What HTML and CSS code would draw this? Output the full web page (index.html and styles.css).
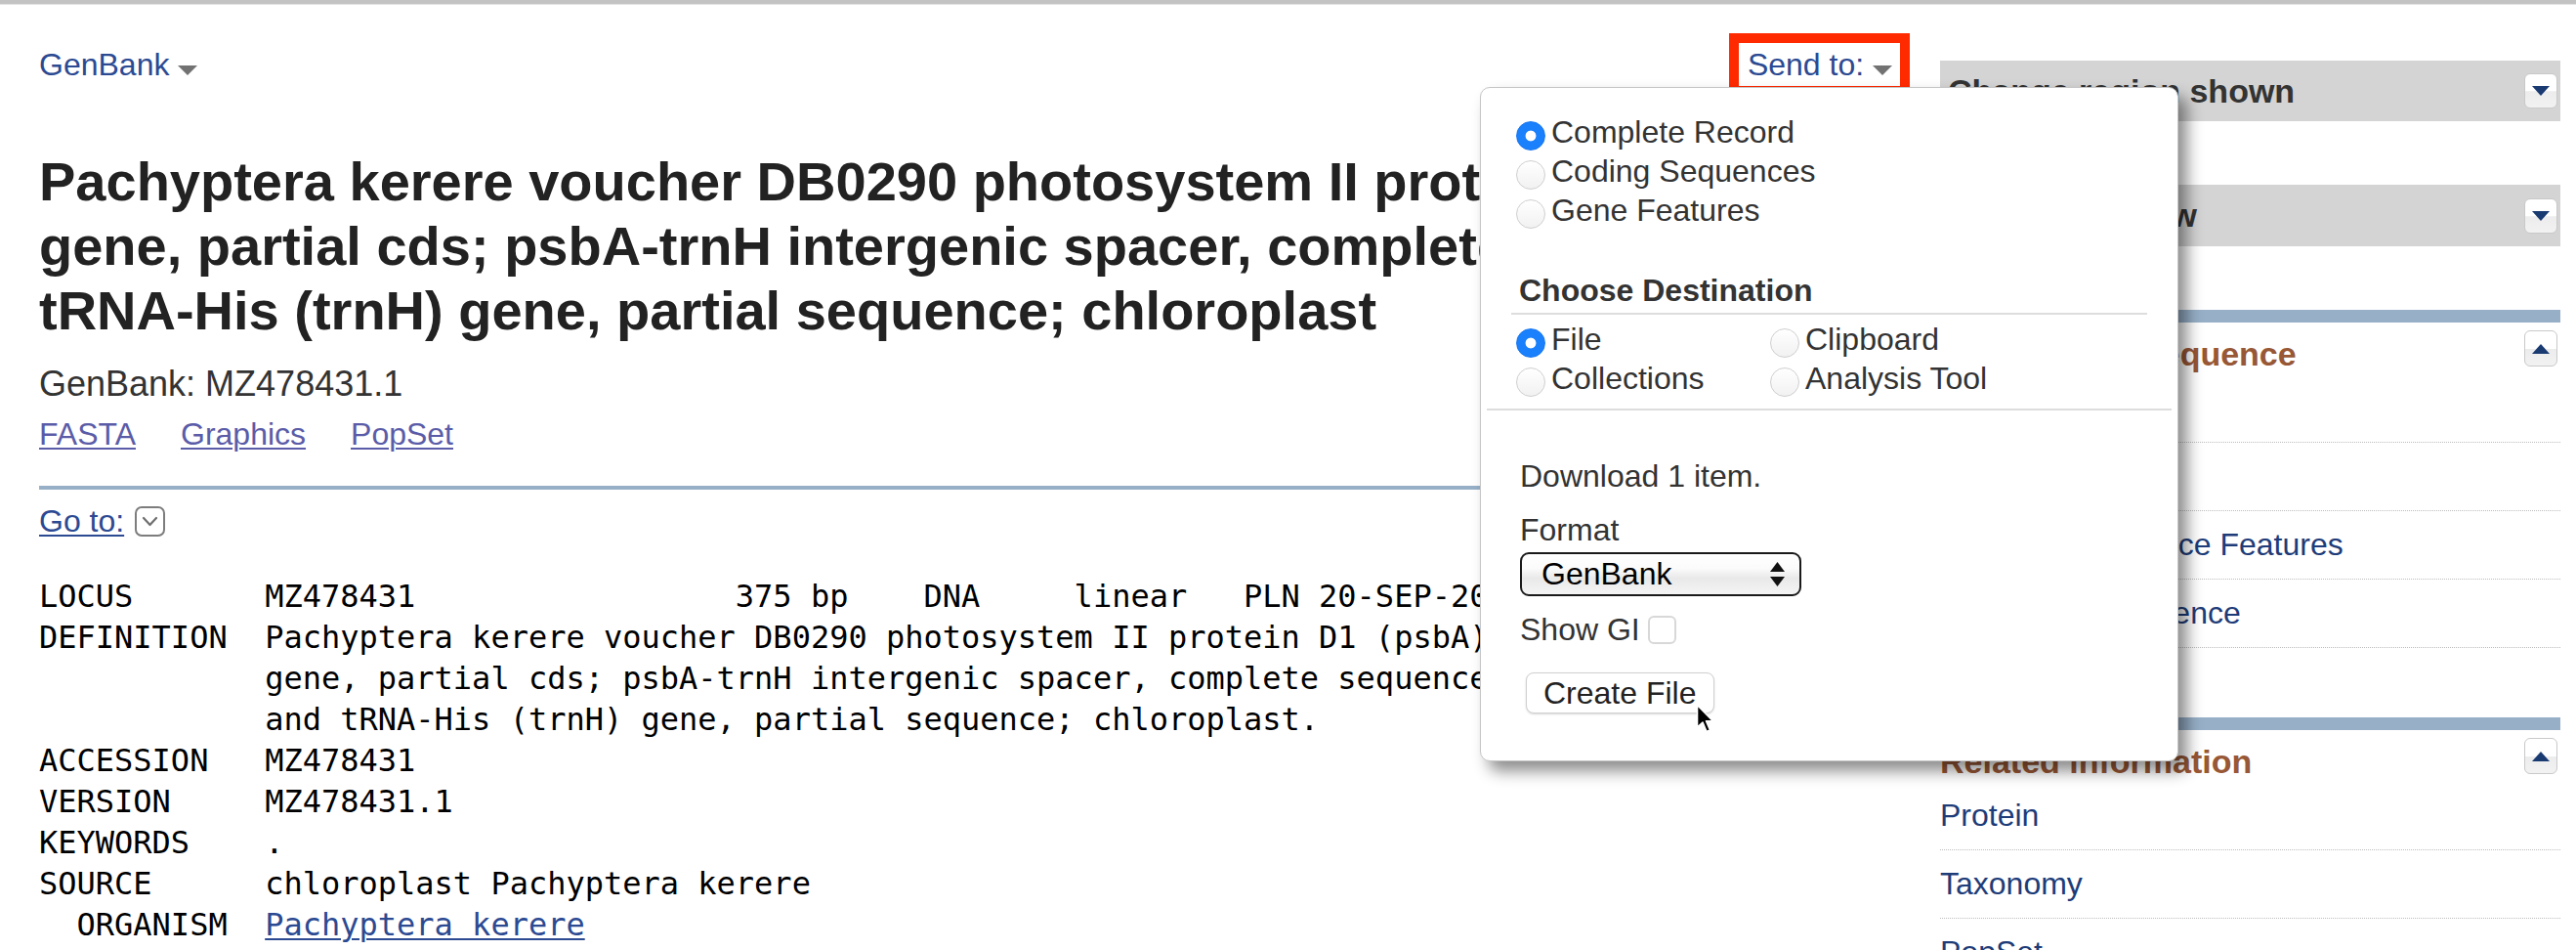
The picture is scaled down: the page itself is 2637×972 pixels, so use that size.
FILE: index.html
```html
<!DOCTYPE html>
<html lang="en">
<head>
<meta charset="utf-8">
<title>Pachyptera kerere voucher DB0290 - GenBank</title>
<link rel="stylesheet" href="styles.css">
</head>
<body>
<div class="topbar"></div>
<div class="page">
  <main class="content">
    <div class="header-row">
      <a class="db-link" href="#">GenBank <span class="tri"></span></a>
      <a class="sendto" href="#">Send to: <span class="tri"></span></a>
    </div>
    <h1 class="title">Pachyptera kerere voucher DB0290 photosystem II protein D1 (psbA) gene, partial cds; psbA-trnH intergenic spacer, complete sequence; and tRNA-His (trnH) gene, partial sequence; chloroplast</h1>
    <p class="subtitle">GenBank: MZ478431.1</p>
    <div class="reportlinks">
      <a href="#">FASTA</a>
      <a href="#">Graphics</a>
      <a href="#">PopSet</a>
    </div>
    <div class="rule"></div>
    <div class="goto">
      <a href="#">Go to:</a>
      <span class="goto-btn">
        <svg width="31" height="31" viewBox="0 0 31 31"><rect x="1" y="1" width="29" height="29" rx="6" ry="6" fill="#fff" stroke="#7d7d7d" stroke-width="2"/><path d="M9 12 L15.5 19 L22 12" fill="none" stroke="#6f6f6f" stroke-width="2.2" stroke-linecap="round" stroke-linejoin="round"/></svg>
      </span>
    </div>
<pre class="record">LOCUS       MZ478431                 375 bp    DNA     linear   PLN 20-SEP-2021
DEFINITION  Pachyptera kerere voucher DB0290 photosystem II protein D1 (psbA)
            gene, partial cds; psbA-trnH intergenic spacer, complete sequence;
            and tRNA-His (trnH) gene, partial sequence; chloroplast.
ACCESSION   MZ478431
VERSION     MZ478431.1
KEYWORDS    .
SOURCE      chloroplast Pachyptera kerere
  ORGANISM  <a class="org" href="#">Pachyptera kerere</a></pre>
  </main>

  <aside class="sidebar">
    <div class="sb-box">
      <span class="sb-box-title">Change region shown</span>
      <span class="toggle down"></span>
    </div>
    <div class="sb-box">
      <span class="sb-box-title">Customize view</span>
      <span class="toggle down"></span>
    </div>

    <section class="sb-section">
      <div class="sb-head">
        <h3>Analyze this sequence</h3>
        <span class="toggle up"></span>
      </div>
      <ul class="sb-list analyze">
        <li><a href="#">Run BLAST</a></li>
        <li><a href="#">Pick Primers</a></li>
        <li><a href="#">Highlight Sequence Features</a></li>
        <li><a href="#">Find in this Sequence</a></li>
      </ul>
    </section>

    <section class="sb-section">
      <div class="sb-head">
        <h3>Related information</h3>
        <span class="toggle up"></span>
      </div>
      <ul class="sb-list">
        <li><a href="#">Protein</a></li>
        <li><a href="#">Taxonomy</a></li>
        <li><a href="#">PopSet</a></li>
      </ul>
    </section>
  </aside>
</div>

<div class="popup">
  <div class="pp-opts">
    <div class="radio-row"><span class="radio on"></span><span>Complete Record</span></div>
    <div class="radio-row"><span class="radio"></span><span>Coding Sequences</span></div>
    <div class="radio-row"><span class="radio"></span><span>Gene Features</span></div>
  </div>
  <div class="pp-dest-title">Choose Destination</div>
  <div class="pp-dest">
    <div class="radio-row"><span class="radio on"></span><span>File</span></div>
    <div class="radio-row"><span class="radio"></span><span>Clipboard</span></div>
    <div class="radio-row"><span class="radio"></span><span>Collections</span></div>
    <div class="radio-row"><span class="radio"></span><span>Analysis Tool</span></div>
  </div>
  <div class="pp-sep"></div>
  <div class="pp-file">
    <div class="pp-line">Download 1 item.</div>
    <div class="pp-line pp-format">Format</div>
    <div class="select">
      <span>GenBank</span>
      <svg width="17" height="27" viewBox="0 0 17 27"><path d="M8.5 1 L16 11 L1 11 Z" fill="#111"/><path d="M1 16 L16 16 L8.5 26 Z" fill="#111"/></svg>
    </div>
    <div class="pp-line pp-gi">Show GI <span class="checkbox"></span></div>
    <button class="create-btn" type="button">Create File</button>
  </div>
  <svg class="cursor" width="22" height="32" viewBox="0 0 22 32"><path d="M1.5 1.5 L1.5 24 L7 19 L11 28.5 L14.5 27 L10.5 17.8 L17.5 17.8 Z" fill="#000" stroke="#fff" stroke-width="1.6" stroke-linejoin="round"/></svg>
</div>
</body>
</html>
```

FILE: styles.css
```css
html, body {
  margin: 0;
  padding: 0;
  overflow: hidden;
  background: #fff;
}
body {
  width: 2637px;
  height: 972px;
  position: relative;
  font-family: "Liberation Sans", Arial, Helvetica, sans-serif;
  font-size: 32px;
  color: #333;
}
a {
  color: #2c4a92;
  text-decoration: none;
}
.topbar {
  height: 4px;
  background: #c3c3c3;
  border-bottom: 1px solid #e3e3e3;
}
.page {
  display: flex;
  align-items: flex-start;
  padding-left: 40px;
}
.content {
  width: 1946px;
  flex: none;
}
.header-row {
  display: flex;
  justify-content: space-between;
  align-items: baseline;
  margin-top: 29px;
  padding-right: 31px;
  line-height: 37px;
}
.tri {
  display: inline-block;
  width: 0;
  height: 0;
  border-left: 10px solid transparent;
  border-right: 10px solid transparent;
  border-top: 10px solid #727272;
}
.sendto {
  border: 10px solid #ff2a00;
  padding: 4px 8px 3px 9px;
}
.title {
  margin: 55px 0 0;
  font-size: 56px;
  line-height: 66px;
  font-weight: bold;
  color: #222;
}
.subtitle {
  margin: 21px 0 0;
  font-size: 36px;
  line-height: 42px;
  color: #333;
}
.reportlinks {
  display: flex;
  gap: 46px;
  margin-top: 12px;
  line-height: 37px;
}
.reportlinks a {
  color: #5b5ca8;
  text-decoration: underline;
  text-decoration-thickness: 2px;
  text-underline-offset: 3px;
}
.rule {
  margin-top: 34px;
  height: 4px;
  background: #97b0c8;
}
.goto {
  display: flex;
  align-items: center;
  gap: 11px;
  margin-top: 14px;
  line-height: 37px;
}
.goto a {
  text-decoration: underline;
  text-decoration-thickness: 2px;
  text-underline-offset: 3px;
}
.goto-btn {
  display: flex;
  width: 31px;
  height: 31px;
}
.record {
  margin: 37px 0 0;
  font-family: "DejaVu Sans Mono", "Liberation Mono", monospace;
  font-size: 32px;
  line-height: 42px;
  color: #000;
}
.record .org {
  text-decoration: underline;
  text-decoration-thickness: 2px;
  text-underline-offset: 3px;
}

/* sidebar */
.sidebar {
  width: 635px;
  flex: none;
  margin-top: 57px;
}
.sb-box {
  height: 62px;
  background: #d4d4d4;
  display: flex;
  align-items: center;
  justify-content: space-between;
  padding: 0 3px 0 8px;
  margin-bottom: 65px;
}
.sb-box + .sb-box {
  height: 63px;
}
.sb-box-title {
  font-size: 34px;
  font-weight: bold;
  color: #333;
}
.toggle {
  width: 34px;
  height: 36px;
  box-sizing: border-box;
  border: 1px solid #c9c9c9;
  border-radius: 6px;
  background: linear-gradient(#ffffff 0%, #ffffff 50%, #ececec 52%, #f2f2f2 100%);
  display: flex;
  align-items: center;
  justify-content: center;
  flex: none;
}
.toggle::after {
  content: "";
  width: 0;
  height: 0;
  border-left: 9px solid transparent;
  border-right: 9px solid transparent;
}
.toggle.down::after {
  border-top: 10px solid #1a3a72;
}
.toggle.up::after {
  border-bottom: 10px solid #1a3a72;
}
.sb-section {
  border-top: 13px solid #97b0c8;
}
.sb-head {
  display: flex;
  justify-content: space-between;
  align-items: flex-start;
  height: 53px;
  box-sizing: border-box;
  padding: 8px 3px 0 0;
}
.sb-head h3 {
  margin: 5px 0 0;
  font-size: 34px;
  line-height: 39px;
  font-weight: bold;
  color: #985735;
}
.sb-head .toggle {
  height: 37px;
}
.sb-list {
  list-style: none;
  margin: 0;
  padding: 0;
}
.sb-list li {
  height: 70px;
  box-sizing: border-box;
  border-bottom: 1px dotted #bdbdbd;
  display: flex;
  align-items: center;
}
.sb-list a {
  color: #1e3c78;
}
.sb-list.analyze {
  padding-bottom: 71px;
}

/* send-to popup */
.popup {
  position: absolute;
  left: 1515px;
  top: 89px;
  width: 715px;
  height: 690px;
  box-sizing: border-box;
  background: #fff;
  border: 1px solid #c6c6c6;
  border-radius: 10px;
  box-shadow: 9px 10px 16px rgba(0, 0, 0, 0.45);
  color: #333;
}
.pp-opts {
  padding: 25px 0 0 36px;
}
.radio-row {
  display: flex;
  align-items: flex-start;
  gap: 6px;
  height: 40px;
  line-height: 40px;
}
.radio {
  width: 30px;
  height: 30px;
  margin-top: 9px;
  box-sizing: border-box;
  border-radius: 50%;
  border: 1px solid #cfcfcf;
  background: linear-gradient(#ffffff, #f1f1f1);
  flex: none;
}
.radio.on {
  border-color: #1877f2;
  background: radial-gradient(circle, #fff 0 5px, #1a80fb 5.8px);
}
.pp-dest-title {
  margin: 44px 31px 0 31px;
  padding: 0 0 4px 8px;
  border-bottom: 2px solid #dddddd;
  font-weight: bold;
  line-height: 37px;
}
.pp-dest {
  display: grid;
  grid-template-columns: 260px auto;
  padding-left: 36px;
  margin-top: 5px;
}
.pp-sep {
  height: 2px;
  background: #dddddd;
  margin: 11px 6px 0;
}
.pp-file {
  padding: 49px 0 0 40px;
}
.pp-line {
  line-height: 37px;
}
.pp-format {
  margin-top: 18px;
}
.select {
  margin-top: 4px;
  width: 288px;
  height: 45px;
  box-sizing: border-box;
  border: 2px solid #1a1a1a;
  border-radius: 9px;
  background: linear-gradient(#ffffff 0%, #fbfbfb 35%, #e9e9e9 60%, #f4f4f4 100%);
  display: flex;
  align-items: center;
  justify-content: space-between;
  padding: 0 14px 0 20px;
  color: #000;
}
.pp-gi {
  margin-top: 16px;
  display: flex;
  align-items: center;
  gap: 8px;
}
.checkbox {
  width: 29px;
  height: 29px;
  box-sizing: border-box;
  border: 2px solid #d8d8d8;
  border-radius: 6px;
  background: #fff;
}
.create-btn {
  display: block;
  margin: 25px 0 0 6px;
  height: 42px;
  padding: 0 17px;
  font-family: inherit;
  font-size: 32px;
  color: #222;
  background: #fff;
  border: 1px solid #d0d0d0;
  border-radius: 8px;
  box-shadow: 0 1px 2px rgba(0, 0, 0, 0.15);
}
.cursor {
  position: absolute;
  left: 220px;
  top: 630px;
}
```
